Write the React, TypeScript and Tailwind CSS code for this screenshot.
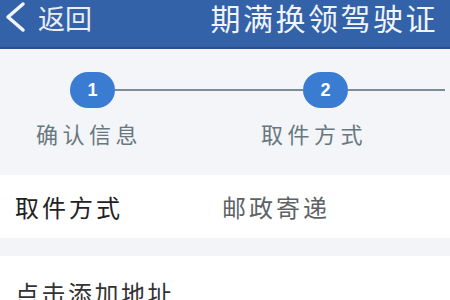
import React from 'react';

const cjk = { fontFamily: '"Noto Sans CJK SC", "Noto Sans", sans-serif' };

export default function App() {
  return (
    <div className="w-[450px] h-[300px] overflow-hidden bg-[#f3f5f8]" style={cjk}>
      {/* Header bar */}
      <div className="h-[49px] bg-[#3462a8] border-b-2 border-[#2b4f8e]">
        <div className="h-[34px] flex items-center justify-between pl-[3px] pr-[12px]">
          <div className="flex items-center">
            <svg width="24" height="32" viewBox="0 0 24 32" fill="none">
              <path d="M20 3 L5 16 L20 29" stroke="#f2f5fb" strokeWidth="3.5" strokeLinecap="round" strokeLinejoin="round" />
            </svg>
            <span className="ml-[11px] text-[27px] leading-none text-[#e9eef7]">返回</span>
          </div>
          <span className="text-[30px] leading-none tracking-[2.5px] text-[#f1f4fa]">期满换领驾驶证</span>
        </div>
      </div>

      {/* Steps */}
      <div className="h-[126px] pt-[23px]">
        <div className="flex items-center h-[36px] pl-[70px] pr-[5px]">
          <div className="w-[45px] h-[36px] rounded-full bg-[#3b7cd3] flex items-center justify-center text-white text-[18px] font-bold leading-none" style={{ fontFamily: '"Liberation Sans", Arial, sans-serif' }}>1</div>
          <div className="flex-1 h-[2px] bg-[#7d8d97]"></div>
          <div className="w-[45px] h-[36px] rounded-full bg-[#3b7cd3] flex items-center justify-center text-white text-[18px] font-bold leading-none" style={{ fontFamily: '"Liberation Sans", Arial, sans-serif' }}>2</div>
          <div className="w-[97px] h-[2px] bg-[#7d8d97]"></div>
        </div>
        <div className="flex mt-[9px] text-[22px] leading-[33px] tracking-[4.5px] text-[#687880]">
          <div className="w-[186px] text-center">确认信息</div>
          <div className="w-[284px] text-center">取件方式</div>
        </div>
      </div>

      {/* Pickup method */}
      <div className="h-[63px] bg-white flex items-center px-[15px] text-[24px] tracking-[3px]">
        <span className="w-[207px] text-[#222222]">取件方式</span>
        <span className="text-[#5e6266]">邮政寄递</span>
      </div>

      <div className="h-[18px] bg-[#f2f4f7]"></div>

      {/* Address */}
      <div className="bg-white h-[60px] pt-[19px] px-[15px] text-[24px] leading-[36px] tracking-[2.5px] text-[#333333]">
        点击添加地址
      </div>
    </div>
  );
}
